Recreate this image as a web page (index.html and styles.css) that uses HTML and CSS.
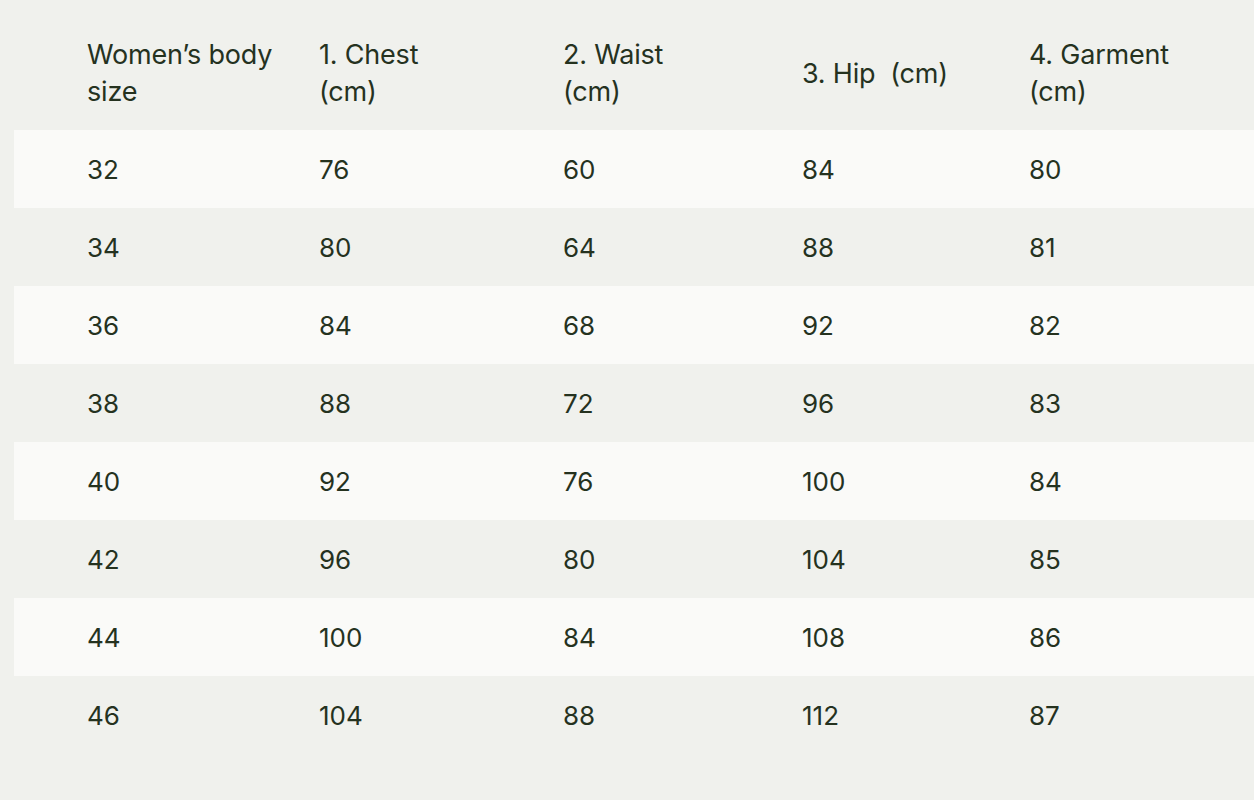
FILE: index.html
```html
<!DOCTYPE html>
<html>
<head>
<meta charset="utf-8">
<link rel="stylesheet" href="styles.css">
</head>
<body>
<div class="wrap">
<table class="size-table">
  <thead>
    <tr>
      <th class="c1">Women’s body size</th>
      <th class="c2">1. Chest (cm)</th>
      <th class="c3">2. Waist (cm)</th>
      <th class="c4">3. Hip &nbsp;(cm)</th>
      <th class="c5">4. Garment (cm)</th>
    </tr>
  </thead>
  <tbody>
    <tr><td>32</td><td>76</td><td>60</td><td>84</td><td>80</td></tr>
    <tr><td>34</td><td>80</td><td>64</td><td>88</td><td>81</td></tr>
    <tr><td>36</td><td>84</td><td>68</td><td>92</td><td>82</td></tr>
    <tr><td>38</td><td>88</td><td>72</td><td>96</td><td>83</td></tr>
    <tr><td>40</td><td>92</td><td>76</td><td>100</td><td>84</td></tr>
    <tr><td>42</td><td>96</td><td>80</td><td>104</td><td>85</td></tr>
    <tr><td>44</td><td>100</td><td>84</td><td>108</td><td>86</td></tr>
    <tr><td>46</td><td>104</td><td>88</td><td>112</td><td>87</td></tr>
  </tbody>
</table>
</div>
</body>
</html>
```
FILE: styles.css
```css
html, body {
  margin: 0;
  padding: 0;
  background: #f0f1ed;
}
body {
  font-family: Inter, "Noto Sans", sans-serif;
  color: #25321f;
}
.wrap {
  padding: 0 0 0 14px;
}
.size-table {
  border-collapse: collapse;
  table-layout: fixed;
  width: 1240px;
}
.size-table th,
.size-table td {
  text-align: left;
  font-weight: 400;
  font-size: 26px;
  line-height: 37px;
  padding: 0;
  vertical-align: middle;
}
.size-table th {
  height: 130px;
  padding-top: 32px;
  padding-bottom: 16px;
  box-sizing: border-box;
  font-size: 27px;
  letter-spacing: -0.2px;
}
.size-table td {
  height: 78px;
}
.size-table th:first-child,
.size-table td:first-child {
  padding-left: 73px;
}
.c1 { width: 305px; }
.c2 { width: 244px; }
.c3 { width: 239px; }
.c4 { width: 227px; }
.c5 { width: 225px; }
.size-table th.c1 { padding-right: 30px; }
.size-table th.c2, .size-table th.c3 { padding-right: 130px; }
.size-table th.c5 { padding-right: 60px; }
.size-table tbody tr:nth-child(odd) {
  background: #fafaf8;
}
```
